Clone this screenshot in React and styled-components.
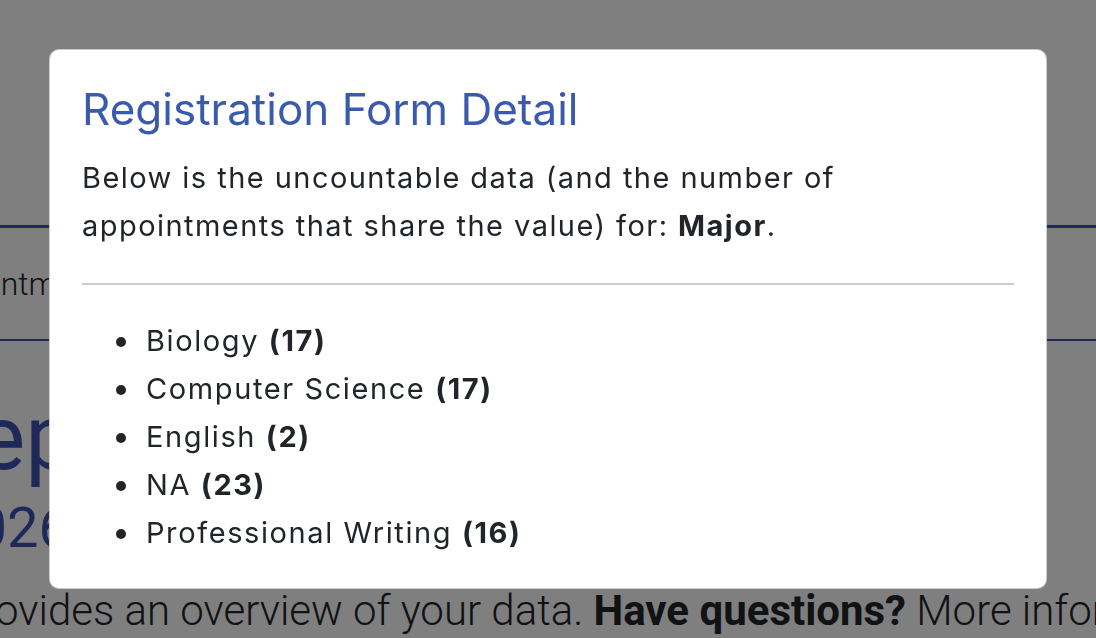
import styled, { createGlobalStyle } from 'styled-components';

const GlobalStyle = createGlobalStyle`
  html, body {
    margin: 0;
    padding: 0;
    background: #ffffff;
    overflow: hidden;
  }
  body {
    font-family: Inter, "Noto Sans", sans-serif;
    color: #212529;
  }
`

const Page = styled.div`
  width: 1096px;
  height: 638px;
  overflow: hidden;
  white-space: nowrap;
`

const Nav = styled.div`
  margin-top: 225px;
  height: 111px;
  border-top: 3px solid #3c53b3;
  border-bottom: 2px solid #3c53b3;
  display: flex;
  align-items: center;
`

const Tab = styled.span`
  margin-left: -80px;
  font-family: Roboto, sans-serif;
  font-weight: 300;
  font-size: 32px;
  color: #212529;
`

const Heading = styled.h1`
  margin: 44px 0 0 -78px;
  font-family: Roboto, sans-serif;
  font-weight: 400;
  font-size: 90px;
  line-height: 108px;
  color: #3c53b3;
`

const SubHeading = styled.h2`
  margin: 2px 0 0 -56px;
  font-family: Roboto, sans-serif;
  font-weight: 400;
  font-size: 56px;
  line-height: 67px;
  color: #3c53b3;
`

const Lead = styled.p`
  margin: 24px 0 0 -42px;
  font-family: Roboto, sans-serif;
  font-weight: 300;
  font-size: 42px;
  line-height: 49px;
  color: #212529;
  b { font-weight: 700; }
`

const Backdrop = styled.div`
  position: fixed;
  inset: 0;
  background: rgba(0, 0, 0, 0.5);
  display: flex;
  justify-content: center;
  align-items: flex-start;
  padding-top: 49px;
`

const Modal = styled.div`
  width: 998px;
  box-sizing: border-box;
  background: #ffffff;
  border: 1px solid rgba(0, 0, 0, 0.2);
  border-radius: 10px;
  padding: 33px 32px 31px 32px;
`

const Title = styled.h3`
  margin: 0;
  font-size: 44px;
  line-height: 53px;
  font-weight: 400;
  color: #3a5aad;
`

const Body = styled.p`
  margin: 18px 0 0;
  font-size: 29px;
  line-height: 48px;
  letter-spacing: 1.45px;
  max-width: 790px;
  color: #212529;
  b { font-weight: 700; }
`

const Divider = styled.hr`
  margin: 33px 0 32px;
  border: 0;
  border-top: 2px solid #cccccc;
`

const List = styled.ul`
  margin: 0;
  padding: 0 0 0 64px;
  list-style: none;
  font-size: 29px;
  line-height: 48px;
  letter-spacing: 1.6px;
  color: #212529;
  b { font-weight: 700; }
`

const Item = styled.li`
  position: relative;
  &::before {
    content: '';
    position: absolute;
    left: -30px;
    top: 20px;
    width: 10px;
    height: 10px;
    border-radius: 50%;
    background: #212529;
  }
`

const majors = [
  ['Biology', 17],
  ['Computer Science', 17],
  ['English', 2],
  ['NA', 23],
  ['Professional Writing', 16],
]

export default function App() {
  return (
    <>
      <GlobalStyle />
      <Page>
        <Nav>
          <Tab>Appointments</Tab>
        </Nav>
        <Heading>Report</Heading>
        <SubHeading>2026</SubHeading>
        <Lead>
          provides an overview of your data. <b>Have questions?</b> More information
        </Lead>
      </Page>
      <Backdrop>
        <Modal>
          <Title>Registration Form Detail</Title>
          <Body>
            Below is the uncountable data (and the number of appointments that share the value) for: <b>Major</b>.
          </Body>
          <Divider />
          <List>
            {majors.map(([name, count]) => (
              <Item key={name}>
                {name} <b>({count})</b>
              </Item>
            ))}
          </List>
        </Modal>
      </Backdrop>
    </>
  )
}
